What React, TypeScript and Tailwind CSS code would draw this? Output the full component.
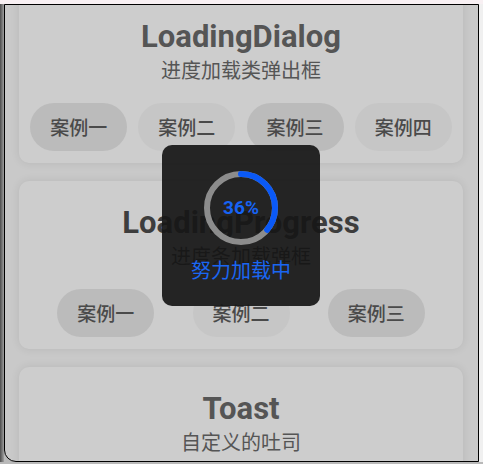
import React from 'react';

// Demo cards behind the loading dialog
interface DemoButton {
  label: string;
  dark: boolean;
}

interface DemoCardProps {
  title: string;
  subtitle: string;
  buttons: DemoButton[];
  titleColor: string;
  subColor: string;
}

const cjk = "font-['Noto_Sans_CJK_SC',sans-serif]";

function DemoCard({ title, subtitle, buttons, titleColor, subColor }: DemoCardProps) {
  return (
    <div className="h-[168px] w-[444px] shrink-0 rounded-[10px] bg-[#cdcdcd] shadow-[0_0_10px_rgba(0,0,0,0.09)] pt-[27px] flex flex-col items-center">
      <div className={`font-['Roboto',sans-serif] font-bold text-[31px] leading-[30px] ${titleColor}`}>{title}</div>
      <div className={`${cjk} text-[20px] leading-[28px] mt-[4px] ${subColor}`}>{subtitle}</div>
      <div className="mt-[19px] w-full flex justify-evenly">
        {buttons.map((b) => (
          <div
            key={b.label}
            className={`w-[97px] h-[48px] rounded-full flex items-center justify-center ${cjk} font-medium text-[19px] text-[#4a4a4a] ${
              b.dark ? 'bg-[#bbbbbb]' : 'bg-[#c6c6c6]'
            }`}
          >
            {b.label}
          </div>
        ))}
      </div>
    </div>
  );
}

function LoadingRing({ percent }: { percent: number }) {
  const r = 34;
  const c = 2 * Math.PI * r;
  return (
    <div className="relative w-[74px] h-[74px]">
      <svg width="74" height="74" viewBox="0 0 74 74">
        <circle cx="37" cy="37" r={r} fill="none" stroke="#8c8c8c" strokeWidth="6" />
        <circle
          cx="37"
          cy="37"
          r={r}
          fill="none"
          stroke="#0a59f7"
          strokeWidth="6"
          strokeLinecap="round"
          strokeDasharray={`${(c * percent) / 100} ${c}`}
          transform="rotate(-90 37 37)"
        />
      </svg>
      <div className="absolute inset-0 flex items-center justify-center font-['Roboto',sans-serif] font-bold text-[19px] text-[#1663f5]">
        {percent}%
      </div>
    </div>
  );
}

export default function App() {
  return (
    <div className="w-[483px] h-[464px] bg-[#b9b9b9] flex flex-col overflow-hidden">
      <div className="h-[4px] shrink-0 bg-[#f8f0f3]" />
      <div className="flex h-[458px] shrink-0">
        <div className="w-[4px] bg-gradient-to-r from-[#4d4d4d] to-[#a0a0a0]" />
        <div className="relative w-[475px] h-[458px] border border-black rounded-bl-[12px] overflow-hidden bg-[#c9c9c9]">
          <div className="mt-[-10px] ml-[14px] flex flex-col gap-[18px]">
            <DemoCard
              title="LoadingDialog"
              subtitle="进度加载类弹出框"
              titleColor="text-[#555555]"
              subColor="text-[#555555]"
              buttons={[
                { label: '案例一', dark: true },
                { label: '案例二', dark: false },
                { label: '案例三', dark: true },
                { label: '案例四', dark: false },
              ]}
            />
            <DemoCard
              title="LoadingProgress"
              subtitle="进度条加载弹框"
              titleColor="text-[#3d3d3d]"
              subColor="text-[#383838]"
              buttons={[
                { label: '案例一', dark: true },
                { label: '案例二', dark: false },
                { label: '案例三', dark: true },
              ]}
            />
            <DemoCard
              title="Toast"
              subtitle="自定义的吐司"
              titleColor="text-[#555555]"
              subColor="text-[#555555]"
              buttons={[]}
            />
          </div>

          {/* Loading dialog overlay */}
          <div className="absolute left-[157px] top-[140px] w-[158px] h-[161px] rounded-[10px] bg-[rgba(22,22,22,0.92)] flex flex-col items-center pt-[26px]">
            <LoadingRing percent={36} />
            <div className={`${cjk} text-[20px] leading-[28px] mt-[11px] text-[#1a66f2]`}>努力加载中</div>
          </div>
        </div>
        <div className="w-[4px] bg-[#f0f0f0]" />
      </div>
    </div>
  );
}
